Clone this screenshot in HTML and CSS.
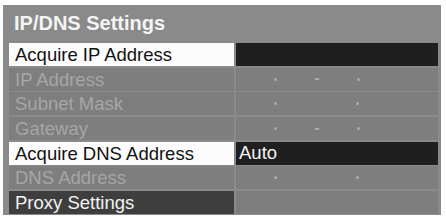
FILE: index.html
```html
<!DOCTYPE html>
<html lang="en">
<head>
  <meta charset="UTF-8" />
  <title>IP/DNS Settings</title>
  <link rel="stylesheet" href="styles.css">
</head>
<body>
  <div class="panel">
    <h1>IP/DNS Settings</h1>
    <div class="rows">
      <div class="label selected">Acquire IP Address</div>
      <div class="value dark"></div>

      <div class="label off">IP Address</div>
      <div class="value"><span class="dot"></span><span class="dot dash"></span><span class="dot"></span></div>

      <div class="label off">Subnet Mask</div>
      <div class="value"><span class="dot"></span><span class="dot hide"></span><span class="dot"></span></div>

      <div class="label off">Gateway</div>
      <div class="value"><span class="dot"></span><span class="dot dash"></span><span class="dot"></span></div>

      <div class="label selected">Acquire DNS Address</div>
      <div class="value dark text">Auto</div>

      <div class="label off">DNS Address</div>
      <div class="value"><span class="dot"></span><span class="dot hide"></span><span class="dot"></span></div>

      <div class="label proxy">Proxy Settings</div>
      <div class="value"></div>
    </div>
  </div>
</body>
</html>
```

FILE: styles.css
```css
body {
  margin: 0;
  background: #fff;
  font-family: "Liberation Sans", Arial, sans-serif;
}
.panel {
  margin: 5px 0 0 3px;
  width: 438px;
  height: 210px;
  box-sizing: border-box;
  background: #8a8a8a;
  padding: 0 3px 2px 6px;
}
h1 {
  margin: 0;
  height: 38px;
  line-height: 37px;
  padding-left: 5px;
  font-size: 20px;
  font-weight: bold;
  color: #f4f4f4;
}
.rows {
  display: grid;
  grid-template-columns: 225px 1fr;
  grid-auto-rows: 23px;
  column-gap: 2px;
  row-gap: 1.7px;
}
.label {
  background: #7e7e7e;
  font-size: 18.5px;
  line-height: 23px;
  padding-left: 6px;
  color: #a6a6a6;
  white-space: nowrap;
}
.label.selected {
  background: #fcfcfc;
  color: #111;
}
.label.proxy {
  background: #3e3e3e;
  color: #f2f2f2;
}
.value {
  background: #7e7e7e;
  display: flex;
  align-items: center;
  padding-left: 38px;
  gap: 38px;
}
.value.dark {
  background: #1f1f1f;
}
.value.text {
  padding-left: 3px;
  color: #f4f4f4;
  font-size: 18.5px;
}
.dot {
  width: 3px;
  height: 3px;
  border-radius: 50%;
  background: #acacac;
}
.dot.dash {
  width: 4px;
  height: 2px;
  border-radius: 0;
}
.dot.hide {
  visibility: hidden;
}
```
